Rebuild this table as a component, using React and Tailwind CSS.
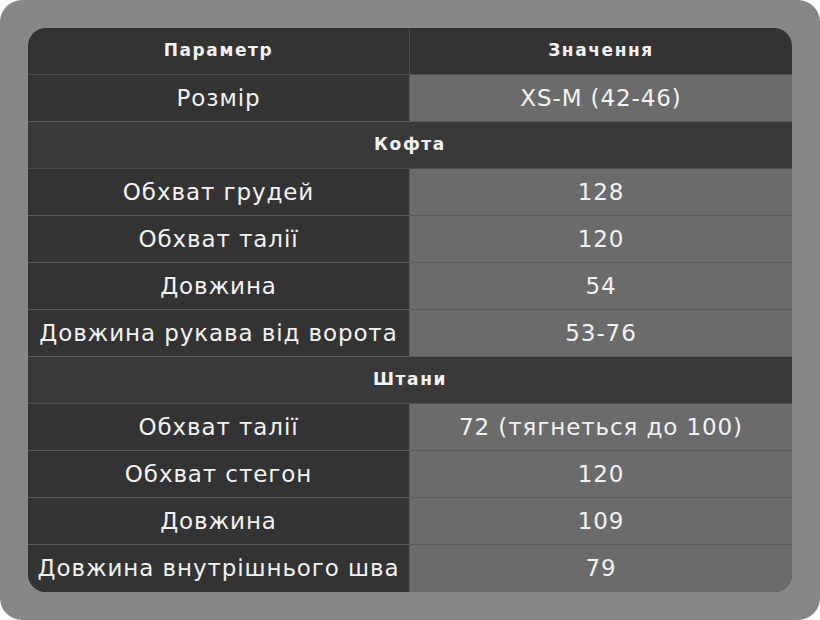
import React from "react";

const rows = [
  { type: "row", label: "Розмір", value: "XS-M (42-46)" },
  { type: "section", label: "Кофта" },
  { type: "row", label: "Обхват грудей", value: "128" },
  { type: "row", label: "Обхват талії", value: "120" },
  { type: "row", label: "Довжина", value: "54" },
  { type: "row", label: "Довжина рукава від ворота", value: "53-76" },
  { type: "section", label: "Штани" },
  { type: "row", label: "Обхват талії", value: "72 (тягнеться до 100)" },
  { type: "row", label: "Обхват стегон", value: "120" },
  { type: "row", label: "Довжина", value: "109" },
  { type: "row", label: "Довжина внутрішнього шва", value: "79" },
];

const SizeTable = () => {
  return (
    <div className="w-[820px] h-[620px] bg-white">
      <div
        className="w-full h-full bg-[#878787] rounded-[22px] p-[28px]"
        style={{ fontFamily: '"DejaVu Sans", sans-serif' }}
      >
        <div className="rounded-[18px] overflow-hidden bg-[#333333] text-[#f2f2f2]">
          <div className="grid grid-cols-2 h-[47px] border-b border-[#4d4d4d]">
            <div className="flex items-center justify-center text-[17px] font-semibold tracking-[1.6px] border-r border-[#4d4d4d]">
              Параметр
            </div>
            <div className="flex items-center justify-center text-[17px] font-semibold tracking-[1.6px]">
              Значення
            </div>
          </div>
          {rows.map((r, i) => {
            const last = i === rows.length - 1;
            const border = last ? "" : "border-b";
            if (r.type === "section") {
              return (
                <div
                  key={i}
                  className={`h-[47px] flex items-center justify-center bg-[#393939] text-[17px] font-semibold tracking-[1.6px] border-[#4d4d4d] ${border}`}
                >
                  {r.label}
                </div>
              );
            }
            return (
              <div key={i} className={`grid grid-cols-2 h-[47px] border-[#5a5a5a] ${border}`}>
                <div className="flex items-center justify-center text-[23px] tracking-[0.9px] bg-[#333333] border-r border-[#5a5a5a]">
                  {r.label}
                </div>
                <div className="flex items-center justify-center text-[23px] tracking-[0.9px] bg-[#6b6b6b]">
                  {r.value}
                </div>
              </div>
            );
          })}
        </div>
      </div>
    </div>
  );
};

export default function App() {
  return <SizeTable />;
}
